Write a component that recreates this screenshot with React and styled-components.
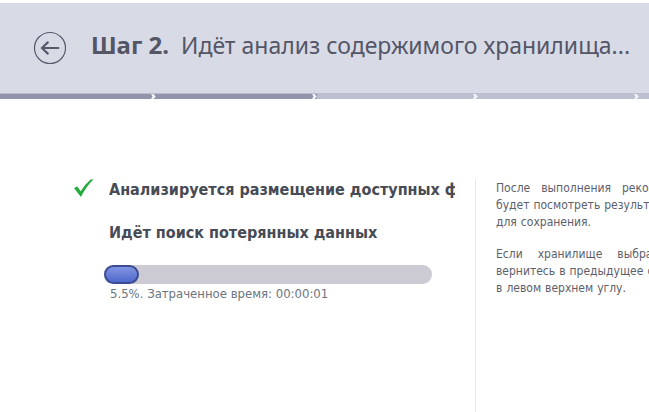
import React from "react";
import styled, { createGlobalStyle } from "styled-components";

const GlobalStyle = createGlobalStyle`
  body {
    margin: 0;
    background: #fff;
    font-family: "DejaVu Sans Condensed", "DejaVu Sans", sans-serif;
    overflow: hidden;
  }
`;

const Page = styled.div`
  display: flex;
  flex-direction: column;
  min-height: 100vh;
  padding-top: 3px;
  box-sizing: border-box;
`;

const Header = styled.header`
  display: flex;
  align-items: center;
  gap: 24px;
  height: 90px;
  padding-left: 33px;
  background: #d8dae6;
`;

const BackButton = styled.button`
  flex: none;
  width: 34px;
  height: 34px;
  padding: 0;
  border: 0;
  background: none;
  cursor: pointer;

  svg {
    display: block;
  }
`;

const Title = styled.h1`
  display: flex;
  align-items: baseline;
  gap: 12px;
  margin: 0;
  padding-bottom: 6px;
  color: #545666;
  font-family: "Noto Sans", "DejaVu Sans", sans-serif;
  font-size: 23px;
  line-height: 32px;
  font-weight: normal;
  white-space: nowrap;

  b {
    font-size: 24px;
  }
`;

const Steps = styled.div`
  display: flex;
  height: 6px;
  overflow: hidden;
`;

const Step = styled.div`
  display: flex;
  justify-content: flex-end;
  flex: none;
  width: ${(props) => (props.$first ? 156 : 161)}px;
  box-sizing: border-box;
  border-top: 1px solid #b9bccd;
  background: ${(props) => (props.$done ? "#9294ab" : "#bcbfd0")};
`;

const Content = styled.main`
  display: grid;
  grid-template-columns: minmax(0, 475px) minmax(0, 1fr);
  flex: 1;
  padding-top: 80px;
`;

const Tasks = styled.section`
  padding: 0 20px 0 74px;
`;

const Task = styled.div`
  display: grid;
  grid-template-columns: 35px minmax(0, 1fr);
  height: 22px;
  margin-bottom: 21px;
`;

const TaskTitle = styled.h2`
  grid-column: 2;
  margin: 0;
  overflow: hidden;
  color: #464b55;
  font-size: 16px;
  line-height: 22px;
  white-space: nowrap;
`;

const Progress = styled.div`
  margin: 0 23px 0 30px;
`;

const Track = styled.div`
  height: 19px;
  border-radius: 10px;
  background: #cccbd4;
`;

const Fill = styled.div`
  height: 19px;
  box-sizing: border-box;
  border: 2px solid #3c4c93;
  border-radius: 10px;
  background: linear-gradient(#8096e2, #4f68cb);
`;

const Status = styled.p`
  margin: 2px 0 0 6px;
  color: #6c7480;
  font-size: 13px;
  line-height: 16px;
  white-space: nowrap;
`;

const Hint = styled.aside`
  overflow: hidden;
  padding: 1px 0 0 20px;
  border-left: 1px solid #e6e6e9;
`;

const Paragraph = styled.p`
  margin: 0 0 15px;
  color: #5c606b;
  font-size: 12px;
  line-height: 17px;
`;

const Line = styled.span`
  display: flex;
  gap: ${(props) => props.$gap || 4}px;
  white-space: nowrap;
`;

const steps = [true, true, false, false, false];

const hints = [
  [
    { text: "После выполнения рекон", gap: 11 },
    { text: "будет посмотреть результа" },
    { text: "для сохранения." },
  ],
  [
    { text: "Если хранилище выбра", gap: 15 },
    { text: "вернитесь в предыдущее о" },
    { text: "в левом верхнем углу." },
  ],
];

const BackIcon = () => (
  <svg width="34" height="34" viewBox="0 0 34 34" fill="none" stroke="#585a6b">
    <circle cx="17" cy="17" r="15.5" strokeWidth="1.2" />
    <path
      d="M25.3 17H9.5M14.8 11.4L9 17l5.8 5.6"
      strokeWidth="2.2"
      strokeLinecap="round"
    />
  </svg>
);

const CheckIcon = () => (
  <svg width="20" height="20" viewBox="0 0 20 20">
    <path
      d="M0 9L3.2 7.6 6.8 12.2Q11 5 16.6.4L19.6.2Q12 7.5 6.9 18z"
      fill="#22ab3c"
    />
  </svg>
);

const Chevron = () => (
  <svg width="5" height="5" viewBox="0 0 5 5">
    <path d="M0 0h2.5L4.8 2.5 2.5 5H0l1.5-2.5z" fill="#f4f4fa" />
  </svg>
);

const App = () => {
  const percent = 5.5;

  return (
    <Page>
      <GlobalStyle />
      <Header>
        <BackButton type="button" aria-label="Назад">
          <BackIcon />
        </BackButton>
        <Title>
          <b>Шаг 2.</b>
          <span>Идёт анализ содержимого хранилища...</span>
        </Title>
      </Header>

      <Steps>
        {steps.map((done, index) => (
          <Step key={index} $first={index === 0} $done={done}>
            <Chevron />
          </Step>
        ))}
      </Steps>

      <Content>
        <Tasks>
          <Task>
            <CheckIcon />
            <TaskTitle>Анализируется размещение доступных ф</TaskTitle>
          </Task>
          <Task>
            <TaskTitle>Идёт поиск потерянных данных</TaskTitle>
          </Task>
          <Progress>
            <Track
              role="progressbar"
              aria-label="Идёт поиск потерянных данных"
              aria-valuenow={percent}
              aria-valuemin={0}
              aria-valuemax={100}
            >
              <Fill
                style={{ width: `calc(18px + (100% - 18px) * ${percent / 100})` }}
              />
            </Track>
            <Status>{percent}%. Затраченное время: 00:00:01</Status>
          </Progress>
        </Tasks>

        <Hint>
          {hints.map((lines, index) => (
            <Paragraph key={index}>
              {lines.map((line) => (
                <Line key={line.text} $gap={line.gap}>
                  {line.text.split(" ").map((word) => (
                    <span key={word}>{word}</span>
                  ))}
                </Line>
              ))}
            </Paragraph>
          ))}
        </Hint>
      </Content>
    </Page>
  );
};

export default App;
